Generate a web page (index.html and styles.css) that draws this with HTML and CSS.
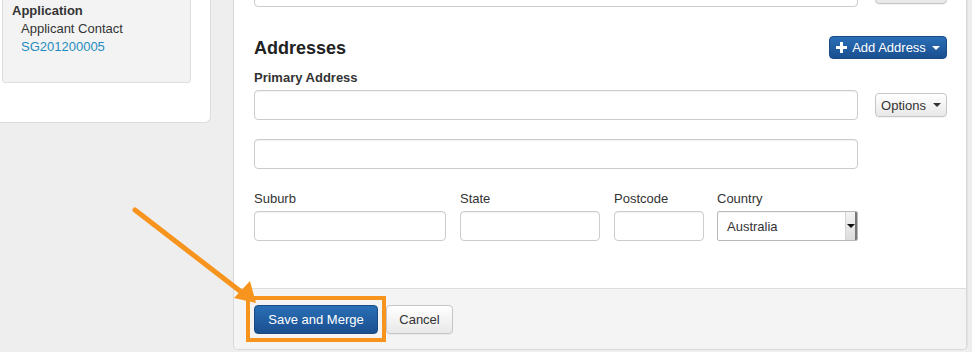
FILE: index.html
```html
<!DOCTYPE html>
<html lang="en">
<head>
    <meta charset="UTF-8">
    <title>Merge Contact - Addresses</title>
    <link rel="stylesheet" href="styles.css">
</head>
<body>
    <div class="page">
        <aside class="sidebar">
            <div class="summary">
                <div class="summary-title">Application</div>
                <div class="summary-item">Applicant Contact</div>
                <a href="#" class="summary-item summary-link">SG201200005</a>
            </div>
        </aside>

        <main class="card">
            <div class="card-body">
                <div class="row row-top">
                    <div class="input input-wide"></div>
                    <button class="btn btn-default btn-options" aria-label="Options"></button>
                </div>

                <div class="section-head">
                    <h2>Addresses</h2>
                    <button class="btn btn-primary btn-add">
                        <svg class="icon-plus" width="11" height="11" viewBox="0 0 11 11"><rect x="4" y="0" width="3" height="11" fill="#fff"/><rect x="0" y="4" width="11" height="3" fill="#fff"/></svg>
                        Add Address <span class="caret caret-light"></span>
                    </button>
                </div>

                <div class="field-label strong">Primary Address</div>
                <div class="row row-address">
                    <div class="input input-wide"></div>
                    <button class="btn btn-default btn-options">Options <span class="caret"></span></button>
                </div>
                <div class="input input-wide input-line2"></div>

                <div class="field-row">
                    <div class="field field-suburb">
                        <div class="field-label">Suburb</div>
                        <div class="input"></div>
                    </div>
                    <div class="field field-state">
                        <div class="field-label">State</div>
                        <div class="input"></div>
                    </div>
                    <div class="field field-postcode">
                        <div class="field-label">Postcode</div>
                        <div class="input"></div>
                    </div>
                    <div class="field field-country">
                        <div class="field-label">Country</div>
                        <div class="input select">
                            <span class="select-value">Australia</span>
                            <span class="select-arrow"><span class="caret"></span></span>
                        </div>
                    </div>
                </div>
            </div>

            <div class="card-footer">
                <button class="btn btn-primary btn-save">Save and Merge</button>
                <button class="btn btn-default btn-cancel">Cancel</button>
            </div>
        </main>
    </div>

    <div class="highlight"></div>
    <svg class="pointer" width="972" height="352" viewBox="0 0 972 352">
        <line x1="135" y1="210" x2="240" y2="291" stroke="#f7941d" stroke-width="5" stroke-linecap="round"/>
        <polygon points="256,303 234,298 250,281" fill="#f7941d"/>
    </svg>
</body>
</html>
```

FILE: styles.css
```css
:root {
    --color-text: #333333;
    --color-link: #1f8dc1;
    --color-border: #cccccc;
    --color-page: #eeeeee;
    --color-orange: #f7941d;
    --font-sans: 'Liberation Sans', Arial, sans-serif;
}

* {
    margin: 0;
    padding: 0;
    box-sizing: border-box;
}

html, body {
    height: 100%;
    overflow: hidden;
    background: var(--color-page);
    color: var(--color-text);
    font-family: var(--font-sans);
    font-size: 13px;
}

.page {
    display: flex;
    align-items: flex-start;
    gap: 22px;
}

/* left column */

.sidebar {
    width: 211px;
    height: 123px;
    flex-shrink: 0;
    background: #fff;
    border-right: 1px solid #dcdcdc;
    border-bottom: 1px solid #dcdcdc;
    border-bottom-right-radius: 6px;
    padding-left: 2px;
}

.summary {
    width: 189px;
    height: 83px;
    background: #f3f3f3;
    border: 1px solid #dddddd;
    border-top: none;
    border-radius: 0 0 4px 4px;
    padding: 2px 0 0 9px;
    line-height: 18px;
}

.summary-title {
    font-weight: bold;
}

.summary-item {
    display: block;
    padding-left: 9px;
}

.summary-link {
    color: var(--color-link);
    text-decoration: none;
}

/* main card */

.card {
    width: 734px;
    height: 350px;
    flex-shrink: 0;
    background: #fff;
    border: 1px solid #d8d8d8;
    border-top: none;
    border-radius: 0 0 5px 5px;
    display: flex;
    flex-direction: column;
    box-shadow: 1px 0 1px rgba(0,0,0,0.05);
}

.card-body {
    padding: 0 19px 47px 20px;
}

.row {
    display: flex;
    align-items: center;
    gap: 17px;
}

.row-top {
    margin-top: -23px;
}

.input {
    height: 30px;
    background: #fff;
    border: 1px solid var(--color-border);
    border-radius: 4px;
    box-shadow: inset 0 1px 1px rgba(0,0,0,0.05);
}

.input-wide {
    width: 604px;
}

.input-line2 {
    margin-top: 19px;
}

.section-head {
    margin-top: 29px;
    height: 23px;
    display: flex;
    align-items: center;
    justify-content: space-between;
}

h2 {
    font-size: 18px;
    font-weight: bold;
    color: #222;
    padding-top: 2px;
}

.field-label {
    line-height: 16px;
    height: 16px;
}

.strong {
    font-weight: bold;
    margin-top: 12px;
    line-height: 14px;
    height: 14px;
}

.row-address {
    margin-top: 5px;
}

.field-row {
    margin-top: 22px;
    display: flex;
    gap: 14px;
}

.field .input {
    margin-top: 4px;
}

.field-suburb { width: 192px; }
.field-state { width: 140px; }
.field-postcode { width: 90px; }
.field-country { width: 141px; margin-left: -1px; }

.select {
    display: flex;
    align-items: center;
    justify-content: space-between;
    border-radius: 2px;
    border-color: #b9b9b9;
    padding-left: 9px;
    overflow: hidden;
}

.select-arrow {
    width: 12px;
    height: 100%;
    display: flex;
    align-items: center;
    justify-content: center;
    background: linear-gradient(#f4f4f4, #dcdcdc);
    border-left: 1px solid #d4d4d4;
    border-right: 2px solid #777;
}

.select-arrow .caret {
    border-top-color: #111;
    margin-left: 0;
}

/* buttons */

.btn {
    font-family: var(--font-sans);
    font-size: 13px;
    border-radius: 4px;
    display: inline-flex;
    align-items: center;
    justify-content: center;
    cursor: pointer;
}

.btn-default {
    color: var(--color-text);
    background: linear-gradient(#ffffff, #e8e8e8);
    border: 1px solid #c6c6c6;
    box-shadow: 0 1px 1px rgba(0,0,0,0.05);
}

.btn-primary {
    color: #fff;
    background: linear-gradient(#2a6fb6, #1a4f90);
    border: 1px solid #1a4a85;
}

.btn-options {
    width: 72px;
    height: 24px;
    gap: 5px;
}

.btn-add {
    width: 118px;
    height: 23px;
    gap: 4px;
}

.icon-plus {
    margin-right: 1px;
}

.caret {
    display: inline-block;
    width: 0;
    height: 0;
    border-left: 4px solid transparent;
    border-right: 4px solid transparent;
    border-top: 4px solid #333;
    margin-left: 2px;
}

.caret-light {
    border-top-color: #fff;
}

.card-footer {
    flex: 1;
    background: #f4f4f4;
    border-top: 1px solid #dddddd;
    border-radius: 0 0 5px 5px;
    padding: 16px 20px 0;
    display: flex;
    gap: 8px;
    align-items: flex-start;
}

.btn-save {
    width: 124px;
    height: 29px;
}

.btn-cancel {
    width: 67px;
    height: 29px;
}

/* annotation overlay */

.highlight {
    position: absolute;
    left: 246px;
    top: 296px;
    width: 140px;
    height: 46px;
    border: 4px solid var(--color-orange);
}

.pointer {
    position: absolute;
    left: 0;
    top: 0;
}
```
